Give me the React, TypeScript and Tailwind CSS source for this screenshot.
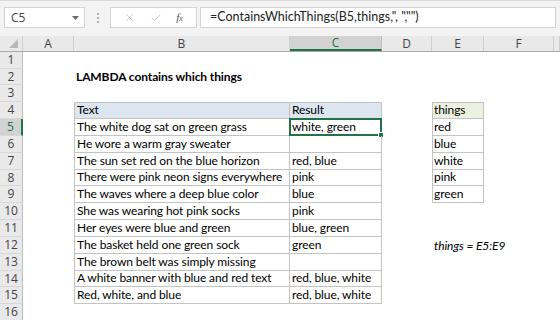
import React from 'react';
import { Check, X } from 'lucide-react';

const cols = [
  { key: 'A', w: 'w-[51px]' },
  { key: 'B', w: 'w-[216px]' },
  { key: 'C', w: 'w-[92px]' },
  { key: 'D', w: 'w-[50px]' },
  { key: 'E', w: 'w-[52px]' },
  { key: 'F', w: 'w-[70px]' },
  { key: 'G', w: 'flex-1' },
];

const heights = [17, 16, 17, 17, 17, 17, 17, 16, 17, 17, 17, 17, 17, 16, 17, 17];

const tableRows: Record<number, [string, string]> = {
  5: ['The white dog sat on green grass', 'white, green'],
  6: ['He wore a warm gray sweater', ''],
  7: ['The sun set red on the blue horizon', 'red, blue'],
  8: ['There were pink neon signs everywhere', 'pink'],
  9: ['The waves where a deep blue color', 'blue'],
  10: ['She was wearing hot pink socks', 'pink'],
  11: ['Her eyes were blue and green', 'blue, green'],
  12: ['The basket held one green sock', 'green'],
  13: ['The brown belt was simply missing', ''],
  14: ['A white banner with blue and red text', 'red, blue, white'],
  15: ['Red, white, and blue', 'red, blue, white'],
};

const things: Record<number, string> = { 5: 'red', 6: 'blue', 7: 'white', 8: 'pink', 9: 'green' };

const Toolbar = () => (
  <div className="h-[36px] bg-[#f3f3f3] border-t border-[#dadada] flex items-start pt-[6px] pl-[4px] pr-[4px] font-['Open_Sans',sans-serif]">
    <div className="w-[81px] h-[21px] bg-white border border-[#d4d4d4] flex items-center justify-between pl-[6px] pr-[5px]">
      <span className="text-[12px] text-[#444]">C5</span>
      <svg width="7" height="4" viewBox="0 0 7 4"><polygon points="0,0 7,0 3.5,4" fill="#6d6d6d" /></svg>
    </div>
    <div className="w-[25px] h-[21px] flex flex-col items-center justify-center gap-[2px]">
      <span className="w-[2px] h-[2px] bg-[#b4b4b4]" />
      <span className="w-[2px] h-[2px] bg-[#b4b4b4]" />
      <span className="w-[2px] h-[2px] bg-[#b4b4b4]" />
    </div>
    <div className="w-[87px] h-[21px] bg-white border border-[#d4d4d4] flex items-center justify-around px-[6px]">
      <X className="w-[11px] h-[11px] text-[#b0b0b0]" strokeWidth={1.5} />
      <Check className="w-[12px] h-[12px] text-[#b0b0b0]" strokeWidth={1.5} />
      <span className="text-[11px] italic text-[#555] font-['Liberation_Serif',serif]">f<span className="text-[8px]">x</span></span>
    </div>
    <div className="flex-1 ml-[3px] h-[21px] bg-white border border-[#d4d4d4] flex items-center pl-[9px]">
      <span className="text-[12.5px] text-[#222] whitespace-nowrap font-['Lato',sans-serif]">=ContainsWhichThings(B5,things,", ","")</span>
    </div>
  </div>
);

const ColumnHeader = () => (
  <div className="flex h-[16px] bg-[#e9e9e9] border-b border-[#ababab] font-['Open_Sans',sans-serif] text-[12px] text-[#444]">
    <div className="w-[23px] relative border-r border-[#cfcfcf]">
      <svg className="absolute right-[4px] bottom-[3px]" width="9" height="9" viewBox="0 0 9 9">
        <polygon points="9,0 9,9 0,9" fill="#b9b9b9" />
      </svg>
    </div>
    {cols.map((c) =>
      c.key === 'C' ? (
        <div key={c.key} className={`${c.w} bg-[#d2d2d2] border-r border-[#bdbdbd] border-b-2 border-b-[#217346] flex items-center justify-center text-[#217346]`}>
          {c.key}
        </div>
      ) : (
        <div key={c.key} className={`${c.w} border-r border-[#cfcfcf] flex items-center justify-center`}>
          {c.key === 'G' ? '' : c.key}
        </div>
      )
    )}
  </div>
);

const Row = ({ n, h }: { n: number; h: number }) => {
  const inTable = n >= 4 && n <= 15;
  const inThings = n >= 4 && n <= 9;
  const isHead = n === 4;
  const selected = n === 5;
  const tr = tableRows[n];
  return (
    <div className={`flex ${h === 17 ? 'h-[17px]' : 'h-[16px]'}`}>
      <div
        className={`w-[23px] flex items-center justify-center border-b border-[#d8d8d8] font-['Open_Sans',sans-serif] text-[12px] tracking-normal ${
          selected ? 'bg-[#d2d2d2] text-[#217346] border-r-2 border-r-[#217346]' : 'bg-[#e9e9e9] text-[#444] border-r border-r-[#bdbdbd]'
        }`}
      >
        {n}
      </div>
      <div className="w-[51px]" />
      {/* B */}
      <div
        className={`w-[216px] flex items-end pl-[2px] pb-[2px] whitespace-nowrap overflow-hidden ${
          inTable ? 'border-l border-r border-b border-[#c3c3c3]' : ''
        } ${isHead ? 'border-t bg-[#dce6f1]' : ''}`}
      >
        {n === 2 && <span className="font-bold">LAMBDA contains which things</span>}
        {isHead && 'Text'}
        {tr && tr[0]}
      </div>
      {/* C */}
      <div
        className={`w-[92px] relative flex items-end pl-[2px] pb-[2px] whitespace-nowrap ${
          inTable ? 'border-r border-b border-[#c3c3c3]' : ''
        } ${isHead ? 'border-t bg-[#dce6f1]' : ''}`}
      >
        {isHead && 'Result'}
        {tr && tr[1]}
        {selected && (
          <div className="absolute -left-[1px] -top-[1px] -right-[1px] -bottom-[1px] border-2 border-[#217346]">
            <div className="absolute -right-[4px] -bottom-[4px] w-[6px] h-[6px] bg-[#217346] border border-white" />
          </div>
        )}
      </div>
      <div className="w-[50px]" />
      {/* E */}
      <div
        className={`w-[52px] flex items-end pl-[1px] pb-[2px] whitespace-nowrap overflow-visible ${
          inThings ? 'border-l border-r border-b border-[#c3c3c3]' : ''
        } ${isHead ? 'border-t bg-[#ebf1de]' : ''}`}
      >
        {isHead && 'things'}
        {things[n]}
        {n === 12 && <span className="italic pl-[1px]">things = E5:E9</span>}
      </div>
      <div className="w-[70px]" />
      <div className="flex-1" />
    </div>
  );
};

export default function App() {
  return (
    <div className="w-[560px] h-[320px] overflow-hidden bg-white">
      <Toolbar />
      <ColumnHeader />
      <div className="font-['Lato',sans-serif] text-[12px] tracking-[-0.1px] text-black leading-none">
        {heights.map((h, i) => (
          <Row key={i} n={i + 1} h={h} />
        ))}
      </div>
    </div>
  );
}
